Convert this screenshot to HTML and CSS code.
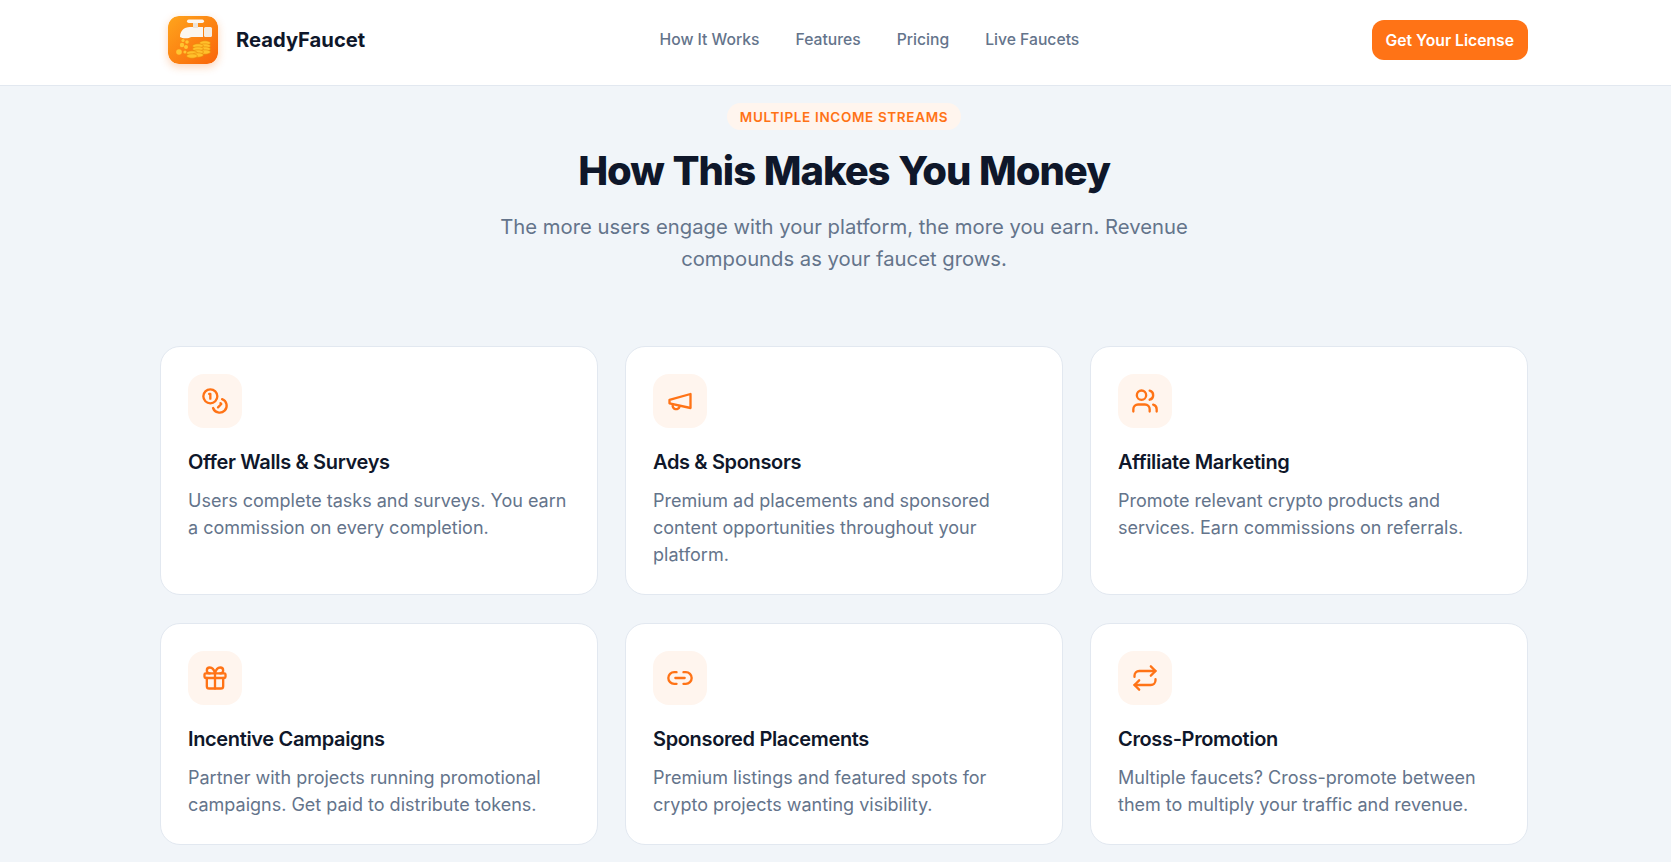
FILE: index.html
```html
<!DOCTYPE html>
<html lang="en">
<head>
    <meta charset="UTF-8">
    <meta name="viewport" content="width=device-width, initial-scale=1.0">
    <title>ReadyFaucet</title>
    <link rel="stylesheet" href="styles.css">
</head>
<body>
    <nav class="navbar">
        <div class="nav-inner">
            <a class="brand" href="#">
                <svg class="logo" viewBox="0 0 50 48">
                    <defs>
                        <linearGradient id="logoBg" x1="0" y1="0" x2="1" y2="1">
                            <stop offset="0" stop-color="#ffa51c"/>
                            <stop offset="1" stop-color="#f9640a"/>
                        </linearGradient>
                    </defs>
                    <rect width="50" height="48" rx="11" fill="url(#logoBg)"/>
                    <path d="M12 21c0-6 4-10 10-10h13v10H25c-2 0-3 0-4 1-3 .5-7 .5-9-1z" fill="#fbf6f0"/>
                    <rect x="36" y="11" width="8" height="10" rx="1.5" fill="#f4ece3"/>
                    <rect x="25" y="6" width="5" height="6" fill="#ece3d8"/>
                    <rect x="19" y="3.5" width="17" height="3.5" rx="1.7" fill="#fbf6f0"/>
                    <g fill="#ffc531">
                        <circle cx="15" cy="24.5" r="1.6"/>
                        <circle cx="19" cy="26" r="1.8"/>
                        <circle cx="14" cy="29" r="2.2"/>
                        <circle cx="18" cy="31" r="2"/>
                        <circle cx="11" cy="36" r="2.8"/>
                        <circle cx="17" cy="36" r="1.6"/>
                    </g>
                    <g fill="#ffc02b" stroke="#e98a0c" stroke-width=".6">
                        <ellipse cx="37" cy="27" rx="5.5" ry="2.2"/>
                        <ellipse cx="37" cy="30" rx="5.5" ry="2.2"/>
                        <ellipse cx="30" cy="30" rx="5.5" ry="2.2"/>
                        <ellipse cx="37" cy="33" rx="5.5" ry="2.2"/>
                        <ellipse cx="30" cy="33" rx="5.5" ry="2.2"/>
                        <ellipse cx="37" cy="36" rx="5.5" ry="2.2"/>
                        <ellipse cx="30" cy="36" rx="5.5" ry="2.2"/>
                        <ellipse cx="24" cy="37" rx="5.5" ry="2.2"/>
                        <ellipse cx="30" cy="39" rx="5.5" ry="2.2"/>
                        <ellipse cx="24" cy="40" rx="5.5" ry="2.2"/>
                    </g>
                </svg>
                <span class="brand-name">ReadyFaucet</span>
            </a>
            <div class="nav-links">
                <a href="#">How It Works</a>
                <a href="#">Features</a>
                <a href="#">Pricing</a>
                <a href="#">Live Faucets</a>
            </div>
            <a class="nav-btn" href="#">Get Your License</a>
        </div>
    </nav>

    <section class="income">
        <div class="section-head">
            <span class="badge">MULTIPLE INCOME STREAMS</span>
            <h2>How This Makes You Money</h2>
            <p>The more users engage with your platform, the more you earn. Revenue compounds as your faucet grows.</p>
        </div>

        <div class="cards">
            <div class="card">
                <div class="card-icon">
                    <svg viewBox="0 0 24 24"><circle cx="8" cy="8" r="6"/><path d="M18.09 10.37A6 6 0 1 1 10.34 18"/><path d="M7 6h1v4"/><path d="m16.71 13.88.7.71-2.82 2.82"/></svg>
                </div>
                <h3>Offer Walls &amp; Surveys</h3>
                <p>Users complete tasks and surveys. You earn a commission on every completion.</p>
            </div>
            <div class="card">
                <div class="card-icon">
                    <svg viewBox="0 0 24 24"><path d="m3 11 18-5v12L3 14v-3z"/><path d="M11.6 16.8a3 3 0 1 1-5.8-1.6"/></svg>
                </div>
                <h3>Ads &amp; Sponsors</h3>
                <p>Premium ad placements and sponsored content opportunities throughout your platform.</p>
            </div>
            <div class="card">
                <div class="card-icon">
                    <svg viewBox="0 0 24 24"><path d="M16 21v-2a4 4 0 0 0-4-4H6a4 4 0 0 0-4 4v2"/><circle cx="9" cy="7" r="4"/><path d="M22 21v-2a4 4 0 0 0-3-3.87"/><path d="M16 3.13a4 4 0 0 1 0 7.75"/></svg>
                </div>
                <h3>Affiliate Marketing</h3>
                <p>Promote relevant crypto products and services. Earn commissions on referrals.</p>
            </div>
            <div class="card">
                <div class="card-icon">
                    <svg viewBox="0 0 24 24"><rect x="3" y="8" width="18" height="4" rx="1"/><path d="M12 8v13"/><path d="M19 12v7a2 2 0 0 1-2 2H7a2 2 0 0 1-2-2v-7"/><path d="M7.5 8a2.5 2.5 0 0 1 0-5A4.8 8 0 0 1 12 8a4.8 8 0 0 1 4.5-5 2.5 2.5 0 0 1 0 5"/></svg>
                </div>
                <h3>Incentive Campaigns</h3>
                <p>Partner with projects running promotional campaigns. Get paid to distribute tokens.</p>
            </div>
            <div class="card">
                <div class="card-icon">
                    <svg viewBox="0 0 24 24"><path d="M9 17H7A5 5 0 0 1 7 7h2"/><path d="M15 7h2a5 5 0 1 1 0 10h-2"/><path d="M8 12h8"/></svg>
                </div>
                <h3>Sponsored Placements</h3>
                <p>Premium listings and featured spots for crypto projects wanting visibility.</p>
            </div>
            <div class="card">
                <div class="card-icon">
                    <svg viewBox="0 0 24 24"><path d="m17 2 4 4-4 4"/><path d="M3 11v-1a4 4 0 0 1 4-4h14"/><path d="m7 22-4-4 4-4"/><path d="M21 13v1a4 4 0 0 1-4 4H3"/></svg>
                </div>
                <h3>Cross-Promotion</h3>
                <p>Multiple faucets? Cross-promote between them to multiply your traffic and revenue.</p>
            </div>
        </div>
    </section>
</body>
</html>
```
FILE: styles.css
```css
html,body{
    margin:0;
    padding:0;
    height:100%;
    overflow:hidden;
}
body{
    background-color:#f1f5f9;
    font-family:Inter,"Noto Sans",sans-serif;
    color:#0f172a;
}
a{
    text-decoration:none;
}
.navbar{
    height:85px;
    background-color:#fff;
    border-bottom:1px solid #e2e8f0;
}
.nav-inner{
    width:1368px;
    height:80px;
    margin-left:160px;
    display:flex;
    align-items:center;
    justify-content:space-between;
}
.brand{
    display:flex;
    align-items:center;
    gap:18px;
    padding-left:8px;
}
.logo{
    width:50px;
    height:48px;
    border-radius:11px;
    box-shadow:0 3px 8px rgba(249,115,22,.3);
}
.brand-name{
    margin-bottom:2px;
    font-size:20.2px;
    font-weight:700;
    color:#0f172a;
}
.nav-links{
    display:flex;
    gap:36px;
    margin-left:2px;
    margin-bottom:2px;
}
.nav-links a{
    font-size:15.7px;
    font-weight:500;
    color:#64748b;
}
.nav-btn{
    height:40px;
    padding:0 14px;
    display:flex;
    align-items:center;
    border-radius:12px;
    background-color:#ff7316;
    color:#fff;
    font-size:15.7px;
    font-weight:600;
}
.income{
    width:1368px;
    margin-left:160px;
}
.section-head{
    display:flex;
    flex-direction:column;
    align-items:center;
    text-align:center;
    padding-top:17px;
}
.badge{
    height:27px;
    padding:0 13px;
    display:flex;
    align-items:center;
    border-radius:14px;
    background-color:#fff5ee;
    color:#ff7316;
    font-size:13.5px;
    font-weight:600;
    letter-spacing:.65px;
}
.section-head h2{
    margin:17px 0 0;
    font-size:40px;
    line-height:48px;
    font-weight:800;
    letter-spacing:-1.05px;
    word-spacing:1px;
    color:#0f172a;
}
.section-head p{
    width:700px;
    margin:16px 0 0;
    font-size:20.25px;
    line-height:32px;
    color:#64748b;
}
.cards{
    display:grid;
    grid-template-columns:repeat(3,1fr);
    gap:28px 27px;
    margin-top:71px;
}
.card{
    padding:27px 27px 26px;
    background-color:#fff;
    border:1px solid #e2e8f0;
    border-radius:20px;
}
.card-icon{
    width:54px;
    height:54px;
    display:flex;
    align-items:center;
    justify-content:center;
    border-radius:16px;
    background-color:#fff5ee;
}
.card-icon svg{
    width:28px;
    height:28px;
    fill:none;
    stroke:#ff7316;
    stroke-width:2;
    stroke-linecap:round;
    stroke-linejoin:round;
}
.card h3{
    margin:22px 0 0;
    font-size:20px;
    line-height:24px;
    font-weight:600;
    letter-spacing:-.35px;
    color:#0f172a;
}
.card p{
    margin:13px 0 0;
    font-size:18px;
    line-height:27px;
    color:#64748b;
}
```
